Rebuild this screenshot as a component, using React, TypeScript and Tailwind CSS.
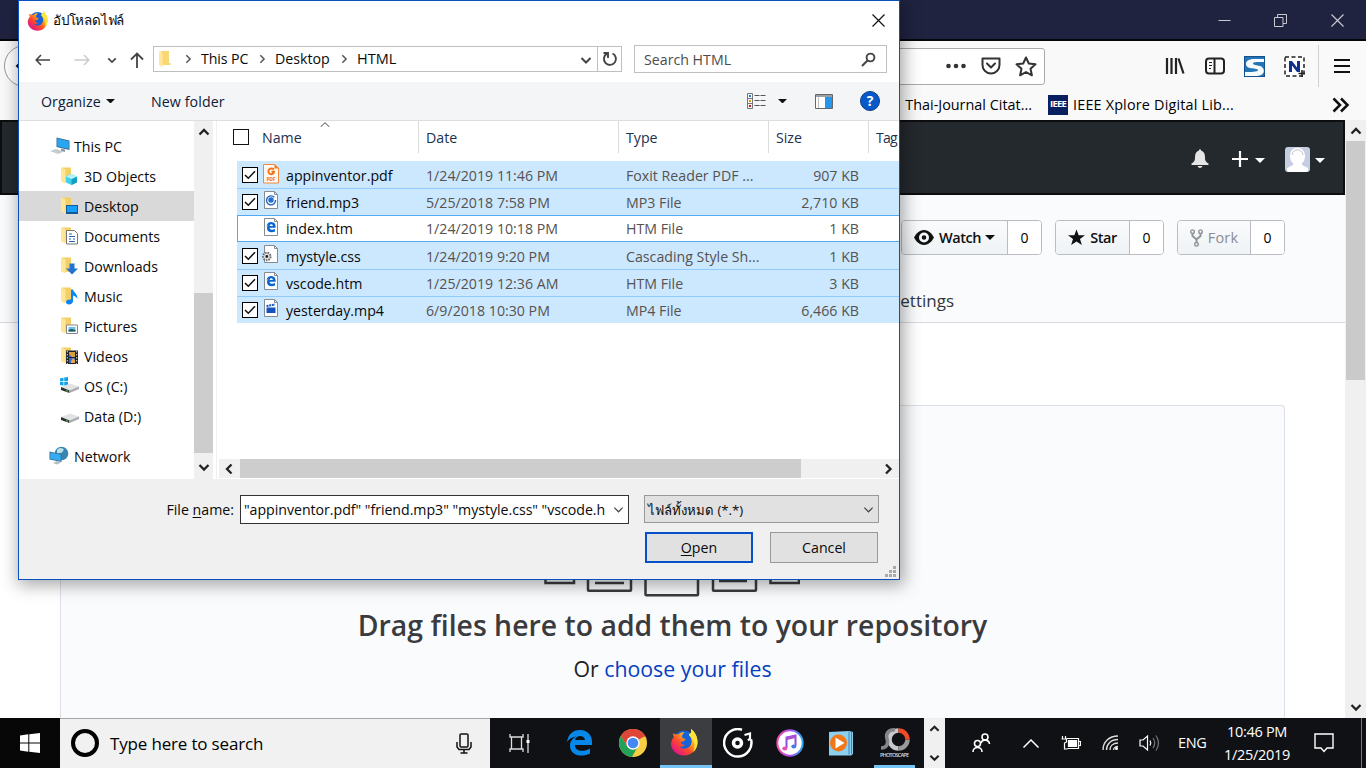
import React from "react";

const ui = "font-['Open_Sans','Noto_Sans',sans-serif]";

function Chevron({ d, w = 12, h = 12, sw = 2, c = "#222" }: { d: "up" | "down" | "left" | "right"; w?: number; h?: number; sw?: number; c?: string }) {
  const paths = { up: "M1.5 8.5 6 4l4.5 4.5", down: "M1.5 4 6 8.5 10.500 4", left: "M8.500 1.500 4 6l4.500 4.500", right: "M4 1.500 8.500 6 4 10.500" };
  return (
    <svg width={w} height={h} viewBox="0 0 12 12" fill="none" stroke={c} strokeWidth={sw} className="shrink-0">
      <path d={paths[d]} />
    </svg>
  );
}

function Caret({ c = "#111", w = 10 }: { c?: string; w?: number }) {
  return (
    <svg width={w} height={w / 2} viewBox="0 0 10 5" className="shrink-0">
      <path d="M0 0h10L5 5z" fill={c} />
    </svg>
  );
}

function Firefox({ size, id }: { size: number; id: string }) {
  return (
    <svg width={size} height={size} viewBox="0 0 28 28" className="shrink-0">
      <defs>
        <linearGradient id={id} x1="0.9" y1="0.05" x2="0.15" y2="0.9">
          <stop offset="0" stopColor="#fff44f" />
          <stop offset="0.35" stopColor="#ffb01f" />
          <stop offset="0.65" stopColor="#ff4a2a" />
          <stop offset="1" stopColor="#e0128a" />
        </linearGradient>
      </defs>
      <circle cx="14" cy="13" r="10.500" fill="#1464d8" />
      <path d="M3 5c0 2 .3 3 .8 4C1 12 .5 16 1.500 19c2 5.500 7 8.500 12.500 8.500 7.500 0 13.500-5.500 13.500-13.500 0-5-2-9.500-6.500-13 .5 2 .3 3 0 4-1 .5-2 1-2 2 3 3 3.500 8 1 11-3 3.500-8 3.500-10.500.5 2 .5 4 0 5.500-1.500-2-.3-4-1-4-2.500 0-1 1-1 2.500-1 1.500-1.500 2-2 2-2.500-2-.3-3-1-3.500-2C12 7 13 5.500 14.500 4.500 12 4 10 5 8.500 6.500 6.500 6.200 4 6.500 3 5z" fill={`url(#${id})`} />
      <path d="M21 1c4 3.500 6.500 8 6.500 13 0 4-1.500 7.500-4 10 1.500-5 1.500-9-1-13-1-2-3-3-3.500-4 0-1 1-1.500 2-2 .3-1 .5-2 0-4z" fill="#ffe43a" />
    </svg>
  );
}

function Folder({ children }: { children?: React.ReactNode }) {
  return (
    <svg width="20" height="20" viewBox="0 0 20 20" className="shrink-0">
      <path d="M3 1.500h9V16H3z" fill="#f4cf68" />
      <path d="M2 1.500l4.500 2v14L2 15.500z" fill="#ffe696" />
      {children}
    </svg>
  );
}

function Monitor() {
  return (
    <svg width="20" height="20" viewBox="0 0 20 20" className="shrink-0">
      <path d="M6.500 1.500l13 3V14l-13-3z" fill="#3a6f96" />
      <path d="M7.300 2.600l11.400 2.700v7.500L7.300 10.200z" fill="#29a6f2" />
      <path d="M0 15l6-2 8 2.500-6 2.500z" fill="#c4cbd2" />
      <path d="M11 12.500l4 1v2.500l-4-1.500z" fill="#8795a3" />
    </svg>
  );
}

function Drive({ win }: { win?: boolean }) {
  return (
    <svg width="20" height="20" viewBox="0 0 20 20" className="shrink-0">
      {win && <path d="M1 2.500l3.500-.8v3.500H1zM5.200 1.500L9 1v4.200H5.200zM1 6h3.500v3.500L1 9zM5.200 6H9v4l-3.800-.6z" fill="#12a3ea" />}
      <path d="M2 11l9-3.500 9 3-9.500 4z" fill="#e1e3e5" />
      <path d="M2 11l8.500 3.500v2.500L2 14z" fill="#2c2e30" />
      <path d="M10.500 14.500l9.500-4v2.500l-9.500 4z" fill="#a9abae" />
      <path d="M7 14l2 .8v1L7 15z" fill="#35e03a" />
    </svg>
  );
}

function Globe() {
  return (
    <svg width="20" height="20" viewBox="0 0 20 20" className="shrink-0">
      <circle cx="12.500" cy="7.500" r="6.800" fill="#3886ad" />
      <path d="M8 4c3-3 6-2 7 0-2 1-1 3-4 3-2 0-2 2-3 1z" fill="#b9dfe9" />
      <path d="M.5 5.500l12 2.500v8L.5 13.500z" fill="#3b7194" />
      <path d="M1.300 6.500l10.400 2.200v6.200L1.300 12.700z" fill="#37abf4" />
      <path d="M4 17l4-2 4 1.500-4 2z" fill="#b4bcc4" />
    </svg>
  );
}

const tree: { label: string; icon: React.ReactNode; child?: boolean; sel?: boolean }[] = [
  { label: "This PC", icon: <Monitor /> },
  { label: "3D Objects", child: true, icon: <Folder><path d="M7 10.500l5.500-2.500 5.500 2.500v6L12.500 19 7 16.500z" fill="#3fd0ea" /><path d="M12.500 13v6l5.500-2.500v-6z" fill="#149fc4" /><path d="M7 10.500L12.500 8l5.500 2.500-5.500 2.500z" fill="#b4f3fb" /></Folder> },
  { label: "Desktop", child: true, sel: true, icon: <Folder><path d="M7 9h12v9H7z" fill="#155a96" /><path d="M8 10h10v6H8z" fill="#149ffa" /></Folder> },
  { label: "Documents", child: true, icon: <Folder><path d="M7.500 4.500h8l3 3v10.500h-11z" fill="#fff" stroke="#777" /><path d="M10 8h3M10 10.500h6M10 13h2M14 13h2M10 15.500h6" stroke="#2466ac" strokeWidth="1.200" /></Folder> },
  { label: "Downloads", child: true, icon: <Folder><path d="M10.500 7.500h5v5H19l-6 6-6-6h3.500z" fill="#2374d2" /></Folder> },
  { label: "Music", child: true, icon: <Folder><path d="M12 3.500h2c.5 3 4.500 4 4.500 9.500-1-2-2.500-3-4.500-3.500V15c0 2-2 3.500-4 3.500s-3-1-3-2.500 2-3 5-2.500z" fill="#0b84f4" /></Folder> },
  { label: "Pictures", child: true, icon: <Folder><path d="M7.500 9h11v8.500h-11z" fill="#fff" stroke="#888" /><path d="M9.500 11h7v4.500h-7z" fill="#68bff0" /><path d="M9.500 14l3-1 4 1v1.500h-7z" fill="#1d5b49" /></Folder> },
  { label: "Videos", child: true, icon: <Folder><path d="M7 4.500h12V18H7z" fill="#20222b" /><path d="M10 6h6v5h-6z" fill="#d9a03a" /><path d="M10 8l3 3h-3zM10 12h6v5h-6z" fill="#316bd1" /><path d="M12 15l2-3 2 2v3h-4z" fill="#e6a83f" /><path d="M8.300 5v13M17.700 5v13" stroke="#ddd" strokeDasharray="1.500 1.500" /></Folder> },
  { label: "OS (C:)", child: true, icon: <Drive win /> },
  { label: "Data (D:)", child: true, icon: <Drive /> },
];

function FileIcon({ kind }: { kind: string }) {
  return (
    <svg width="20" height="20" viewBox="0 0 20 20" className="shrink-0">
      {kind === "pdf" ? (
        <>
          <path d="M1.500.5H12l4.500 3.500v15h-15z" fill="#fff8f0" stroke="#f08a3c" />
          <path d="M12.500 0l4.500 4.500h-4.500z" fill="#f07c22" />
          <path d="M12 5c-4-1.500-6 .5-5.500 3.500 1 2.500 5 2.500 5.500-.8H9.500" fill="none" stroke="#f27416" strokeWidth="2" />
          <text x="4.500" y="17.300" fontSize="5" fontWeight="700" fill="#f27416" textLength="9">PDF</text>
        </>
      ) : (
        <>
          <path d="M2.500.5h10l3 3v14h-13z" fill="#fff" stroke="#858b90" />
          <path d="M12.500.5v3h3" fill="none" stroke="#858b90" />
        </>
      )}
      {kind === "mp3" && <g fill="none" stroke="#1b64c6" strokeWidth="1.400"><path d="M12.300 6.300A4.500 4.500 0 1 0 13.500 9" /><circle cx="9" cy="9" r="2" /><circle cx="9" cy="9" r=".5" /></g>}
      {kind === "htm" && <path d="M4.500 8.800C4.800 5.500 7 4.100 9.300 4.100c3 0 4.300 2.200 4.300 4.300v1.300H7.500c.1 2.300 3.200 2.500 5.500 1.300v2.400c-3.500 1.700-8 .7-8-3.200 0-1.800 1-3.100 2.300-3.900-1.200.5-2.200 1.300-2.800 2.500zM7.600 8h3.300c0-2.200-3-2.200-3.300 0z" fill="#0864d0" />}
      {kind === "css" && <><circle cx="4.800" cy="11.500" r="3.800" fill="#e1e3e4" stroke="#6c7073" strokeWidth="2" strokeDasharray="1.600 1" /><circle cx="4.800" cy="11.500" r="1.400" fill="#222" /></>}
      {kind === "mp4" && <><path d="M4.500 8.500h9V14h-9z" fill="#1452bd" /><path d="M4.500 7l8.500-1.500" stroke="#1452bd" strokeWidth="2" strokeDasharray="2 .7" /></>}
    </svg>
  );
}

const files = [
  ["appinventor.pdf", "1/24/2019 11:46 PM", "Foxit Reader PDF ...", "907 KB", "pdf"],
  ["friend.mp3", "5/25/2018 7:58 PM", "MP3 File", "2,710 KB", "mp3"],
  ["index.htm", "1/24/2019 10:18 PM", "HTM File", "1 KB", "htm"],
  ["mystyle.css", "1/24/2019 9:20 PM", "Cascading Style Sh...", "1 KB", "css"],
  ["vscode.htm", "1/25/2019 12:36 AM", "HTM File", "3 KB", "htm"],
  ["yesterday.mp4", "6/9/2018 10:30 PM", "MP4 File", "6,466 KB", "mp4"],
];

function Dialog() {
  return (
    <div className="absolute left-[18px] top-0 flex h-[580px] w-[882px] flex-col border border-[#0a50c0] bg-white text-[14.2px] leading-5 text-[#0a0a0a] shadow-[2px_3px_16px_2px_rgba(0,0,0,0.35)]">
      <div className="flex h-[38px] items-center pl-[8px] pr-[14px]">
        <Firefox size={21} id="fx-title" />
        <span className="ml-[5px] text-[13.400px] tracking-[-0.2px]">อัปโหลดไฟล์</span>
        <svg width="13" height="13" viewBox="0 0 13 13" className="ml-auto" stroke="#111" strokeWidth="1.200"><path d="M.5.5l12 12M12.500.5l-12 12" /></svg>
      </div>
      <div className="flex h-[43px] items-center pb-[3px] pl-4 pr-3">
        <svg width="16" height="14" viewBox="0 0 16 14" fill="none" stroke="#444" strokeWidth="1.600" className="mt-[2px]"><path d="M6 2L1.200 7 6 12M1.200 7H15" /></svg>
        <svg width="16" height="14" viewBox="0 0 16 14" fill="none" stroke="#ccc" strokeWidth="1.600" className="ml-[23px] mt-[2px]"><path d="M10 2l4.800 5L10 12M14.800 7H.5" /></svg>
        <span className="ml-[17px] mt-[2px]"><Chevron d="down" w={10} h={10} c="#444" sw={2} /></span>
        <svg width="14" height="16" viewBox="0 0 14 16" fill="none" stroke="#444" strokeWidth="1.800" className="ml-[13px] mt-[2px]"><path d="M1 7.500l6-6 6 6M7 1.500V16" /></svg>
        <div className="ml-[9px] flex h-[26px] w-[469px] items-center border border-[#bfbfbf]">
          <svg width="20" height="20" viewBox="0 0 20 20" className="ml-[3px]"><path d="M4 2h8v12h1.500v2H4z" fill="#f8d775" /><path d="M2 2l3.500 2v14L2 16z" fill="#ffe79b" /></svg>
          <span className="ml-[6px]"><Chevron d="right" w={10} h={10} c="#555" sw={1.800} /></span>
          <span className="ml-[8px] w-[48px] whitespace-nowrap tracking-[-0.1px]">This PC</span>
          <span className="ml-[8px]"><Chevron d="right" w={10} h={10} c="#555" sw={1.800} /></span>
          <span className="ml-[8px] w-[55px]">Desktop</span>
          <span className="ml-[9px]"><Chevron d="right" w={10} h={10} c="#555" sw={1.800} /></span>
          <span className="ml-[8px] text-[14.500px]">HTML</span>
          <span className="ml-auto mr-[5px] mt-[2px]"><Chevron d="down" w={12} h={12} c="#444" /></span>
          <div className="flex h-full w-[24px] items-center justify-center border-l border-[#bfbfbf]">
            <svg width="16" height="16" viewBox="0 0 16 16" fill="none" stroke="#444" strokeWidth="1.900"><path d="M10.500 2.500a6 6 0 1 1-5.500.2M1.500 2h4.500v5" /></svg>
          </div>
        </div>
        <div className="ml-3 flex h-7 w-[253px] items-center justify-between border border-[#bfbfbf] pl-[9px] pr-[10px] text-[#4c4c4c]">
          <span className="pt-px">Search HTML</span>
          <svg width="15" height="15" viewBox="0 0 15 15" fill="none" stroke="#444" strokeWidth="1.900"><circle cx="9.500" cy="5.500" r="3.900" /><path d="M6.500 8.500L1 14" /></svg>
        </div>
      </div>
      <div className="flex h-[39px] items-center border-b border-[#dcdfe2] bg-[#f4f5f7] pl-[22px] pr-[19px] text-[#0e2038]">
        <span className="w-[61px] pt-px tracking-[0.050px]">Organize</span>
        <span className="ml-[4px]"><Caret w={9} /></span>
        <span className="ml-[36px] pt-px tracking-[0.100px]">New folder</span>
        <svg width="19" height="16" viewBox="0 0 19 16" className="ml-auto"><path d="M.5.5h5v15h-5zM.5 5.500h5M.5 10.500h5" fill="none" stroke="#777" /><path d="M2 2h2v2H2z" fill="#287dc8" /><path d="M2 7h2v2H2z" fill="#d59b18" /><path d="M2 12h2v2H2z" fill="#b92020" /><path d="M7.500 2.500h5M13.500 2.500h5M7.500 7.500h5M13.500 7.500h5M7.500 12.500h5M13.500 12.500h5" stroke="#555" /></svg>
        <span className="ml-[12px]"><Caret w={9} /></span>
        <svg width="18" height="15" viewBox="0 0 18 15" className="ml-[28px]"><path d="M.5.5h17v14H.5z" fill="#fff" stroke="#666" /><path d="M1 1h16v2H1z" fill="#9ba0a5" /><path d="M10 3h7v11h-7z" fill="#2497ed" /><path d="M3.500 3v11" stroke="#bbb" /></svg>
        <span className="ml-[27px] flex h-5 w-5 items-center justify-center rounded-full border border-[#093b86] bg-[#0759ca] text-[14px] font-bold text-white">?</span>
      </div>
      <div className="flex h-[358px]">
        <div className="flex w-[175px] flex-col pt-[10px]">
          {tree.map((t) => (
            <div key={t.label} className={"flex h-[30px] shrink-0 items-center whitespace-nowrap " + (t.child ? "gap-[5px] pl-[40px] " : "gap-[4px] pl-[31px] ") + (t.sel ? "bg-[#d9d9d9]" : "")}>
              {t.icon}
              <span className="pt-[2px]">{t.label}</span>
            </div>
          ))}
          <div className="mt-[10px] flex h-[30px] items-center gap-[5px] pl-[30px]"><Globe /><span className="pt-[2px]">Network</span></div>
        </div>
        <div className="flex w-[19px] flex-col items-center bg-[#f0f0f0]">
          <div className="flex h-[22px] items-center"><Chevron d="up" sw={2.300} /></div>
          <div className="mt-[150px] h-[160px] w-full bg-[#cdcdcd]" />
          <div className="mt-[8px]"><Chevron d="down" sw={2.300} /></div>
        </div>
        <div className="ml-[3px] flex w-[683px] flex-col border-l border-[#f0f0f0]">
          <div className="flex h-[32px] items-center text-[#1b3150]">
            <div className="relative flex h-full w-[202px] items-center border-r border-[#dcdcdc] pl-[16px]">
              <span className="h-[16px] w-[16px] border border-[#111] bg-white" />
              <span className="ml-[13px] pt-[2px]">Name</span>
              <svg width="10" height="5" viewBox="0 0 10 5" className="absolute left-[103px] top-[1px]" fill="none" stroke="#444"><path d="M.5 5L5 .7 9.500 5" /></svg>
            </div>
            <span className="flex h-full w-[200px] items-center border-r border-[#dcdcdc] pl-[7px] pt-[2px]">Date</span>
            <span className="flex h-full w-[150px] items-center border-r border-[#dcdcdc] pl-[7px] pt-[2px]">Type</span>
            <span className="flex h-full w-[100px] items-center border-r border-[#dcdcdc] pl-[7px] pt-[2px]">Size</span>
            <span className="pl-[7px] pt-[2px] text-[14px] tracking-[-0.8px]">Tag</span>
          </div>
          <div className="mt-[8px] flex flex-col pl-[20px]">
            {files.map((f, i) => (
              <div key={f[0]} className={"flex h-[27px] items-center whitespace-nowrap " + (i === 2 ? "border border-r-0 border-[#54aaf0] pl-[4px]" : "pl-[5px] bg-[#cce8ff] " + (i === 0 || i === 3 ? "border-t border-[#cce8ff]" : "border-t border-[#91cbfb]"))}>
                {i === 2 ? <span className="w-4" /> : (
                  <span className="flex h-4 w-4 items-center justify-center border border-black bg-white">
                    <svg width="12" height="10" viewBox="0 0 12 10" fill="none" stroke="#111" strokeWidth="1.500"><path d="M1 5l3.300 3.300L11 1.300" /></svg>
                  </span>
                )}
                <span className="ml-[4px] flex pb-[2px]"><FileIcon kind={f[4]} /></span>
                <span className="ml-[4px] w-[140px] pt-px">{f[0]}</span>
                <span className="w-[200px] pt-px text-[#565250]">{f[1]}</span>
                <span className="w-[150px] pt-px text-[#565250]">{f[2]}</span>
                <span className="w-[83px] pt-px text-right text-[#565250]">{f[3]}</span>
              </div>
            ))}
          </div>
          <div className="ml-[2px] mt-[136px] flex h-[19px] items-center bg-[#f0f0f0] pl-[4px] pr-[5px]">
            <Chevron d="left" sw={2.300} />
            <div className="ml-[5px] h-full w-[561px] bg-[#cdcdcd]" />
            <span className="ml-auto"><Chevron d="right" sw={2.300} /></span>
          </div>
        </div>
      </div>
      <div className="relative flex h-[100px] flex-col bg-[#f0f0f0] pt-[16px]">
        <div className="flex items-start">
          <span className="mt-[5px] w-[215px] text-right">File <u className="underline-offset-2">n</u>ame:</span>
          <div className="ml-[6px] flex h-[29px] w-[389px] items-center border border-[#333] bg-white pl-[3px] pr-[4px]">
            <span className="w-[364px] overflow-hidden whitespace-nowrap tracking-[-0.040px]">"appinventor.pdf" "friend.mp3" "mystyle.css" "vscode.h</span>
            <span className="ml-auto"><Chevron d="down" w={11} h={11} sw={1.300} c="#444" /></span>
          </div>
          <div className="ml-[15px] flex h-[28px] w-[235px] items-center justify-between border border-[#999] bg-[#e1e1e1] pl-[3px] pr-[4px]">
            <span className="whitespace-nowrap pt-px text-[13.200px]">ไฟล์ทั้งหมด (*.*)</span>
            <Chevron d="down" w={11} h={11} sw={1.300} c="#444" />
          </div>
        </div>
        <div className="ml-[626px] mt-[8px] flex gap-[17px]">
          <button className="h-[31px] w-[108px] border-2 border-[#0750c8] bg-[#e1e1e1]"><u className="underline-offset-2">O</u>pen</button>
          <button className="h-[31px] w-[108px] border border-[#999] bg-[#e1e1e1]">Cancel</button>
        </div>
        <svg width="11" height="11" viewBox="0 0 11 11" fill="#aaa" className="absolute bottom-[2px] right-[3px]"><path d="M8 0h3v3H8zM4 4h3v3H4zM8 4h3v3H8zM0 8h3v3H0zM4 8h3v3H4zM8 8h3v3H8z" /></svg>
      </div>
    </div>
  );
}

function CountButton({ w, count, muted, children }: { w: string; count: string; muted?: boolean; children: React.ReactNode }) {
  return (
    <div className="flex h-[35px] overflow-hidden rounded-[4px] border border-[#b9bdc1] text-[14.500px] font-semibold">
      <div className={"flex items-center justify-center border-r border-[#b9bdc1] bg-gradient-to-b from-[#fafbfc] to-[#eff3f6] tracking-[-0.5px] " + w + (muted ? " text-[#8a8e92]" : " text-[#111]")}>{children}</div>
      <div className="flex w-[33px] items-center justify-center bg-white text-[14px] font-medium text-black">{count}</div>
    </div>
  );
}

function Browser() {
  return (
    <div className="flex h-[718px] flex-col">
      <div className="flex h-[41px] items-center justify-end border-b-2 border-[#05050c] bg-[#202340] pr-[22px] text-[#c7c8d0]">
        <svg width="13" height="13" viewBox="0 0 13 13" stroke="currentColor"><path d="M.5 7.500h12" /></svg>
        <svg width="13" height="13" viewBox="0 0 13 13" fill="none" stroke="currentColor" className="ml-[43px] mt-[2px]"><path d="M.5 3.500h8.500v9H.5zM3.500 3.500V.5h9v9H9" /></svg>
        <svg width="13" height="13" viewBox="0 0 13 13" stroke="currentColor" strokeWidth="1.200" className="ml-[44px] mt-[2px]"><path d="M.5.5l12 12M12.500.5l-12 12" /></svg>
      </div>
      <div className="flex h-[79px] flex-col bg-[#f9f9fa]">
        <div className="flex h-[50px] items-center pl-[4px] pr-[16px] text-[#222]">
          <div className="h-[42px] w-[42px] rounded-full border border-[#999] bg-white pl-[10px] pt-[14px]"><svg width="14" height="12" viewBox="0 0 14 12" fill="none" stroke="#111" strokeWidth="2"><path d="M7 1L2 6l5 5M2 6h12" /></svg></div>
          <div className="ml-[20px] flex h-[37px] flex-1 items-center justify-end rounded-[3px] border border-[#aaa] bg-white pr-[7px]">
            <svg width="20" height="6" viewBox="0 0 20 6" fill="#333"><circle cx="2.500" cy="3" r="2.300" /><circle cx="10" cy="3" r="2.300" /><circle cx="17.500" cy="3" r="2.300" /></svg>
            <svg width="20" height="18" viewBox="0 0 20 18" fill="none" stroke="#333" strokeWidth="2" strokeLinecap="round" strokeLinejoin="round" className="ml-[15px]"><path d="M1.500 1.500h17V8a8.500 8.500 0 0 1-17 0zM6 6.500l4 4 4-4" /></svg>
            <svg width="22" height="21" viewBox="0 0 22 21" fill="none" stroke="#333" strokeWidth="2" strokeLinejoin="round" className="ml-[14px]"><path d="M11 1.500l2.800 6 6.700.8-5 4.500 1.400 6.500-5.900-3.300-5.900 3.300 1.400-6.500-5-4.500 6.700-.8z" /></svg>
          </div>
          <svg width="20" height="18" viewBox="0 0 20 18" stroke="#222" strokeWidth="2.200" className="ml-[120px]"><path d="M2 1v16M6.500 1v16M11 1v16M13.500 1.500l5 15" /></svg>
          <svg width="20" height="18" viewBox="0 0 20 18" fill="none" stroke="#222" strokeWidth="2" className="ml-[20px]"><rect x="1" y="1.500" width="18" height="15" rx="3" /><path d="M9.500 2v14" /><path d="M4 5.500h3M4 8.500h3M4 11.500h2" strokeWidth="1.200" /></svg>
          <svg width="21" height="21" viewBox="0 0 21 21" className="ml-[19px]"><rect x=".5" y=".5" width="20" height="20" fill="#2474b6" stroke="#12518e" /><path d="M20 3H10C0 3 0 11 6 12c3 .8 8 .500 8 2s-3 2-13 2v4h12c8 0 9-8 3-10-3-1-7-1-7-2.500S12 6 20 6z" fill="#f5fafd" /></svg>
          <svg width="21" height="21" viewBox="0 0 21 21" className="ml-[19px]"><path d="M1 1h19v19H1z" fill="#fff" stroke="#222" strokeWidth="1.500" strokeDasharray="4 2.500" /><path d="M5 16V5h3l5 6.500V5h3v11h-3L8 9.500V16z" fill="#10308e" /><path d="M18 14v7M14.500 17.500h7" stroke="#222" strokeWidth="1.600" /></svg>
          <span className="ml-[13px] h-[42px] border-l border-[#d0d0d2]" />
          <svg width="16" height="16" viewBox="0 0 16 16" stroke="#111" strokeWidth="2.200" className="ml-[15px]"><path d="M0 2h16M0 8h16M0 14h16" /></svg>
        </div>
        <div className="flex h-[29px] items-center pb-[2px] pl-[891px] pr-[16px] text-[14.400px] text-black">
          <span className="w-[141px] whitespace-nowrap text-right">Thai-Journal Citat...</span>
          <span className="ml-[16px] flex h-5 w-5 items-center justify-center bg-[#08205f] text-[9.500px] font-bold tracking-[-0.8px] text-white">IEEE</span>
          <span className="ml-[5px] whitespace-nowrap tracking-[0.180px]">IEEE Xplore Digital Lib...</span>
          <svg width="18" height="16" viewBox="0 0 18 16" fill="none" stroke="#111" strokeWidth="2.500" className="ml-auto"><path d="M1.500 1.500L8 8l-6.500 6.500M9 1.500L15.500 8 9 14.500" /></svg>
        </div>
      </div>
      <div className="flex h-[598px]">
        <div className="flex w-[1345px] flex-col bg-white">
          <div className="flex h-[75px] items-center justify-end border-2 border-[#0b0d0f] bg-[#24292e] pt-[3px] pr-[18px]">
            <svg width="20" height="20" viewBox="0 0 20 20" fill="#e5e5e6"><path d="M9 .5h2v1c3 1 4 3.500 4 7s1 4.500 3.500 6v1.500h-17v-1.500C4 13 5 12 5 8.500s1-6 4-7zM7.500 17h5c-1 2.500-4 2.500-5 0z" /></svg>
            <svg width="16" height="16" viewBox="0 0 16 16" stroke="#fff" strokeWidth="2.200" className="ml-[22px]"><path d="M8 0v16M0 8h16" /></svg>
            <span className="ml-[7px] mt-[2px]"><Caret c="#fff" /></span>
            <svg width="25" height="25" viewBox="0 0 25 25" className="ml-[20px]"><rect width="25" height="25" rx="3" fill="#c5cde3" /><path d="M5 9c0-11 15-11 15 0 0 3-1 6-3 7v2l6 3v2q0 2-2 2H4q-2 0-2-2v-2l6-3v-2c-2-1-3-4-3-7z" fill="#fff" /><path d="M7 8C8 1 17 1 18 8" fill="none" stroke="#c5c5ca" /></svg>
            <span className="ml-[5px] mt-[2px]"><Caret c="#fff" /></span>
          </div>
          <div className="flex h-[128px] flex-col border-b border-[#d8dade] bg-[#fafbfc] pl-[901px] pt-[25px]">
            <div className="flex gap-[13px]">
              <CountButton w="w-[106px]" count="0">
                <svg width="20" height="15" viewBox="0 0 20 15" fill="#111"><path fillRule="evenodd" d="M10 0c5 0 8 4 10 7.500C18 11 15 15 10 15S2 11 0 7.500C2 4 5 0 10 0zm0 2.500a5 5 0 1 0 0 10 5 5 0 0 0 0-10zm0 2.700a2.300 2.300 0 1 1 0 4.600 2.300 2.300 0 0 1 0-4.600z" /></svg>
                <span className="ml-[5px] mr-[4px]">Watch</span><Caret />
              </CountButton>
              <CountButton w="w-[74px]" count="0">
                <svg width="17" height="17" viewBox="0 0 18 17" fill="#111"><path d="M9 0l2.300 6H18l-5.300 4 2 6.500L9 12.700l-5.700 3.800 2-6.500L0 6h6.700z" /></svg>
                <span className="ml-[5px]">Star</span>
              </CountButton>
              <CountButton w="w-[73px]" count="0" muted>
                <svg width="13" height="18" viewBox="0 0 13 18" fill="none" stroke="#909498" strokeWidth="1.400"><circle cx="2.500" cy="2.700" r="1.800" /><circle cx="10.500" cy="2.700" r="1.800" /><circle cx="6.500" cy="15.300" r="1.800" /><path d="M2.500 4.500V7l4 3.500 4-3.500V4.500M6.500 10.500v3" strokeWidth="2" /></svg>
                <span className="ml-[5px] font-normal tracking-[0.200px]">Fork</span>
              </CountButton>
            </div>
            <span className="-ml-[10px] mt-[34px] flex w-[63px] justify-end text-[17px] leading-6 text-[#30363c]">Settings</span>
          </div>
          <div className="mx-[60px] mt-[82px] flex w-[1225px] flex-1 flex-col items-center rounded-t-[4px] border border-b-0 border-[#dcdfe4] bg-[#fafbfc] pt-[150px]">
            <svg width="256" height="42" viewBox="0 0 256 42" fill="none" stroke="#3b3b3e" strokeWidth="2.500" className="mr-[2px]"><path d="M1.500 10v17H30V10M44 5v29q0 .8.800.8h41.400q.8 0 .8-.8V5M51 27h29M101.500 0v38.500q0 .8.800.8h50.900q.8 0 .8-.8V0M169 5v29q0 .8.800.8h41.400q.8 0 .8-.8V5M175 25h28M226.500 10v17H255V10" /></svg>
            <h1 className="mt-[7px] whitespace-nowrap text-[28.400px] font-semibold leading-10 text-[#3b3b3f]">Drag files here to add them to your repository</h1>
            <p className="mt-[8px] whitespace-nowrap text-[21.300px] leading-8 text-[#222]">Or <span className="text-[#0540c2]">choose your files</span></p>
          </div>
        </div>
        <div className="flex flex-1 flex-col items-center bg-[#f0f0f0]">
          <div className="flex h-[21px] items-center"><Chevron d="up" sw={2.300} /></div>
          <div className="h-[239px] w-[19px] bg-[#cacaca]" />
          <span className="mb-[5px] mt-auto"><Chevron d="down" sw={2.300} /></span>
        </div>
      </div>
    </div>
  );
}

function Chrome() {
  return (
    <svg width="28" height="28" viewBox="0 0 28 28">
      <circle cx="14" cy="14" r="14" fill="#f7cf43" />
      <path d="M1.900 7A14 14 0 0 1 26.100 7L14 14z" fill="#df4637" />
      <path d="M14 7.500h12.400A14 14 0 0 0 1.900 7l6 10z" fill="#df4637" />
      <path d="M1.900 7a14 14 0 0 0 11 21l6-10.500-10.500 0z" fill="#24a159" />
      <circle cx="14" cy="14" r="6.700" fill="#fff" />
      <circle cx="14" cy="14" r="5.300" fill="#4488f3" />
    </svg>
  );
}

function Taskbar() {
  return (
    <div className="flex h-[50px] bg-[#101114] text-white">
      <div className="flex w-[60px] items-center justify-center bg-[#070707]">
        <svg width="20" height="20" viewBox="0 0 20 20" fill="#fff"><path d="M0 2.500l8.300-1.200v8.200H0zM9.300 1.200L20 0v9.500H9.300zM0 10.500h8.300v8.200L0 17.500zM9.300 10.500H20V20L9.300 18.800z" /></svg>
      </div>
      <div className="flex w-[430px] items-center border-t border-[#a5a5a5] bg-[#f1f1f1] pl-[11px] pr-[18px] text-black">
        <span className="-mt-[2px] h-[28px] w-[28px] rounded-full border-[4px] border-black" />
        <span className="ml-[11px] text-[17px] tracking-[-0.170px]">Type here to search</span>
        <svg width="16" height="21" viewBox="0 0 16 21" fill="none" stroke="#111" strokeWidth="1.500" className="-mt-px ml-auto"><rect x="4" y="1" width="8" height="13" rx="1" /><path d="M1 9v5l2 2.500h10l2-2.500V9M8 17v3M4.500 20h7" /></svg>
      </div>
      <div className="flex w-[434px] items-center">
        <div className="flex w-[60px] justify-center"><svg width="22" height="20" viewBox="0 0 22 20" fill="none" stroke="#ddd" strokeWidth="1.300"><path d="M1 1v3h13V1M1 19v-3h13v3M2.500 4v12M12.500 4v12M19 1v6M19 10v10" /><path d="M17.500 7h3v3h-3z" fill="#fff" stroke="none" /></svg></div>
        <div className="flex w-[60px] justify-center"><svg width="26" height="26" viewBox="0 0 26 26"><path fillRule="evenodd" d="M0 12C1.500 3 7 0 13 0c8 0 12 6 12 12v3H8c0 7 9 7 15 3.500v5C14 28 3 25 3 16c0-5 3-8 6.500-9.500C5 7 2 9 0 12zm8-2h10c-.5-5.500-9-5.500-10 0z" fill="#0788e8" /></svg></div>
        <div className="flex w-[50px] justify-center pr-[5px]"><Chrome /></div>
        <div className="flex h-full w-[52px] items-center justify-center border-b-[3px] border-[#76c4f5] bg-[#3c3d40] pr-[4px]"><Firefox size={28} id="fx-bar" /></div>
        <div className="flex w-[52px] justify-center"><svg width="30" height="30" viewBox="0 0 30 30" fill="none" stroke="#fff"><path d="M19 1.800a13.700 13.700 0 1 0 9 9.500" strokeWidth="2.500" /><circle cx="14.500" cy="15" r="4" strokeWidth="3.500" /><path d="M21.500 7l5.500-1.500v5l-2 2" strokeWidth="2.200" /></svg></div>
        <div className="flex w-[52px] justify-center"><svg width="28" height="28" viewBox="0 0 28 28"><defs><linearGradient id="itunes" x1="0" x2="1"><stop offset="0" stopColor="#f34ea5" /><stop offset=".5" stopColor="#ab4af0" /><stop offset="1" stopColor="#27a9ef" /></linearGradient></defs><circle cx="14" cy="14" r="12.700" fill="#fff" stroke="url(#itunes)" strokeWidth="2" /><path d="M10.500 19V8.500l9-2V17" fill="none" stroke="#8950de" strokeWidth="2" /><path d="M10.500 9.500l9-2" stroke="#b04fd0" strokeWidth="3" /><ellipse cx="8.800" cy="19.500" rx="2.500" ry="2" fill="#e84fb0" /><ellipse cx="17.800" cy="17.500" rx="2.500" ry="2" fill="#447be7" /></svg></div>
        <div className="flex w-[50px] justify-center"><svg width="26" height="26" viewBox="0 0 26 26"><path d="M1 2l20-1 4 1v22l-2 1.500H1z" fill="#8dcff0" /><path d="M21 1.500v23M23.500 2v22" stroke="#3b85b2" /><circle cx="10.500" cy="13" r="8.500" fill="#f17718" /><path d="M7.500 7.500l9 5.500-9 5.500z" fill="#fff" /></svg></div>
        <div className="ml-[8px] flex h-full w-[41px] items-start justify-center border-b-[3px] border-[#76c4f5] pt-[9px]"><svg width="30" height="31" viewBox="0 0 30 31" fill="none"><path d="M18.500 3.500a9 9 0 0 0 0 18" stroke="#c8c8c8" strokeWidth="4.500" /><path d="M18.500 21.500a9 9 0 0 0 9-9" stroke="#999" strokeWidth="4.500" /><path d="M18.500 3.500a9 9 0 0 1 9 9" stroke="#f04b26" strokeWidth="4.500" /><path d="M15 2.800C8 2.500 5.500 7 7 11.500c1.500 5 0 9.500-6 9.500" stroke="#85858a" strokeWidth="3.500" /><text x="0" y="30" fontSize="5.500" fill="#ddd" fontWeight="600" textLength="29">PHOTOSCAPE</text></svg></div>
      </div>
      <div className="flex w-[21px] flex-col items-center justify-between bg-[#f0f0f0] py-[5px]"><Chevron d="up" w={11} h={11} sw={2.300} /><Chevron d="down" w={11} h={11} sw={2.300} /></div>
      <div className="flex flex-1 items-center pl-[27px]">
        <svg width="19" height="20" viewBox="0 0 19 20" fill="none" stroke="#fff" strokeWidth="1.600"><circle cx="13" cy="4" r="3" /><circle cx="5.500" cy="10.500" r="3" /><path d="M1 19c0-6 9-6 9 0M9 10c1-4 8-4 8.500 1" /></svg>
        <svg width="16" height="9" viewBox="0 0 16 9" fill="none" stroke="#fff" strokeWidth="1.500" className="ml-[32px]"><path d="M.5 8.500L8 1l7.500 7.500" /></svg>
        <svg width="20" height="14" viewBox="0 0 20 14" fill="none" stroke="#fff" strokeWidth="1.200" className="ml-[22px]"><path d="M5.500 2.500h12v10h-11M17.500 5.500h2v4h-2M1.500 0v3M4.500 0v3M.5 3h5v3l-2 1v6h3" /><path d="M7.500 4.500h8v6h-8z" fill="#fff" /></svg>
        <svg width="17" height="16" viewBox="0 0 17 16" fill="none" stroke="#ddd" strokeWidth="1.400" className="ml-[21px]"><path d="M1 15C1 7 7 1 16 1M4.500 15C4.500 9 9 4.500 16 4.500M8 15c0-4 3-7 8-7M11.500 15c0-2 2-3.500 4.500-3.500" /><circle cx="14.500" cy="13.500" r="1.500" fill="#fff" stroke="none" /></svg>
        <svg width="21" height="18" viewBox="0 0 21 18" fill="none" stroke="#fff" strokeWidth="1.200" className="ml-[20px]"><path d="M1 6h3l4.500-4v14L4 12H1zM11 6.500q1.500 2.500 0 5" /><path d="M14 4q3.500 5 0 10M17 1.500q5 7.500 0 15" stroke="#777" /></svg>
        <span className="ml-[18px] w-[30px] text-[14.500px] tracking-[-0.3px]">ENG</span>
        <div className="-mt-px ml-[11px] w-[76px] whitespace-nowrap text-center text-[14.500px] leading-[23px] tracking-[-0.3px]">10:46 PM<br />1/25/2019</div>
        <svg width="20" height="20" viewBox="0 0 20 20" fill="none" stroke="#fff" strokeWidth="1.400" className="ml-[19px]"><path d="M1 1h18v14h-6l-3 3.500L7 15H1z" /></svg>
        <span className="ml-auto mr-[4px] h-full border-l border-[#777]" />
      </div>
    </div>
  );
}

export default function App() {
  return (
    <div className={"relative h-[768px] w-[1366px] overflow-hidden bg-white " + ui}>
      <Browser />
      <Taskbar />
      <Dialog />
    </div>
  );
}
